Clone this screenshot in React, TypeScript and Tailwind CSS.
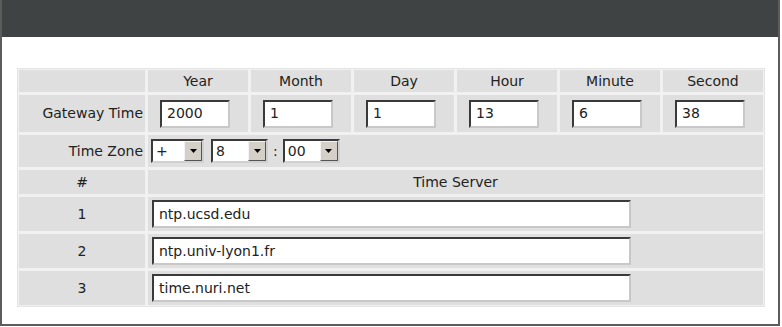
import React from "react";

const font = { fontFamily: '"DejaVu Sans", Verdana, sans-serif' };

const Cell = ({ children, className = "" }: { children?: React.ReactNode; className?: string }) => (
  <div className={`bg-[#dfdfdf] flex items-center ${className}`}>{children}</div>
);

const TextBox = ({ value, w }: { value: string; w: string }) => (
  <div
    className={`${w} h-[28px] bg-white border-2 border-t-[#3a3a3a] border-l-[#3a3a3a] border-b-[#c8c8c8] border-r-[#c8c8c8] flex items-center pl-[5px] text-[14px] text-[#222]`}
  >
    {value}
  </div>
);

const Select = ({ value, w }: { value: string; w: string }) => (
  <div
    className={`${w} h-[24px] bg-white border-2 border-t-[#3a3a3a] border-l-[#3a3a3a] border-b-[#d0d0d0] border-r-[#d0d0d0] flex items-center justify-between text-[14px] text-[#222]`}
  >
    <span className="pl-[3px]">{value}</span>
    <span className="w-[18px] h-[20px] bg-[#d4d0c8] border border-t-[#f4f4f4] border-l-[#f4f4f4] border-b-[#555] border-r-[#555] flex items-center justify-center">
      <svg width="7" height="4" viewBox="0 0 7 4">
        <path d="M0 0h7L3.5 4z" fill="#000" />
      </svg>
    </span>
  </div>
);

export default function App() {
  const heads = ["Year", "Month", "Day", "Hour", "Minute", "Second"];
  const vals = ["2000", "1", "1", "13", "6", "38"];
  const servers = ["ntp.ucsd.edu", "ntp.univ-lyon1.fr", "time.nuri.net"];

  return (
    <div style={font} className="w-[782px] h-[327px] bg-white">
      <div className="w-[780px] h-[326px] border-2 border-t-0 border-[#5c5c5c] flex flex-col">
        <div className="h-[37px] bg-[#404344]" />

        <div className="pt-[31px] pl-[15px]">
          {/* time table */}
          <div className="w-[748px] bg-[#f1f1f1] border border-[#e4e4e4] p-[1px] grid grid-cols-[126px_repeat(6,100px)] grid-rows-[22px_37px_32px_24px_34px_34px_34px] gap-[3px] text-[14px] text-[#222]">
            <Cell />
            {heads.map((h) => (
              <Cell key={h} className="justify-center">{h}</Cell>
            ))}

            <Cell className="justify-end pr-[2px]">Gateway Time</Cell>
            {vals.map((v, i) => (
              <Cell key={i} className="pl-[12px]">
                <TextBox value={v} w="w-[70px]" />
              </Cell>
            ))}

            <Cell className="justify-end pr-[2px]">Time Zone</Cell>
            <Cell className="col-span-6 pl-[3px] gap-[7px]">
              <Select value="+" w="w-[53px]" />
              <Select value="8" w="w-[57px]" />
              <span className="-mx-[2px]">:</span>
              <Select value="00" w="w-[57px]" />
            </Cell>

            <Cell className="justify-center">#</Cell>
            <Cell className="col-span-6 justify-center">Time Server</Cell>

            {servers.map((s, i) => (
              <React.Fragment key={s}>
                <Cell className="justify-center">{i + 1}</Cell>
                <Cell className="col-span-6 pl-[4px]">
                  <TextBox value={s} w="w-[479px]" />
                </Cell>
              </React.Fragment>
            ))}
          </div>
        </div>
      </div>
    </div>
  );
}
